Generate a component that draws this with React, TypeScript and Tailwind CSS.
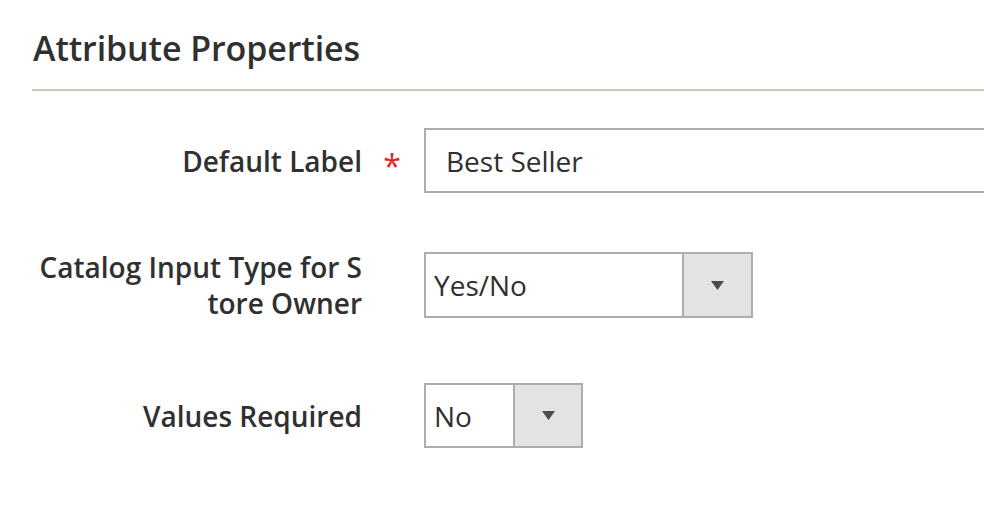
export default function App() {
  return (
    <div
      className="w-[984px] h-[520px] overflow-hidden bg-white text-[#303030]"
      style={{ fontFamily: '"Open Sans", "Liberation Sans", sans-serif' }}
    >
      <div className="pl-[32px]">
        {/* Section title */}
        <h2 className="pt-[26px] pl-[1px] text-[34px] leading-[44px] font-semibold tracking-[-0.1px]">
          Attribute Properties
        </h2>
        <div className="mt-[19px] h-[2px] bg-[#ccc5bc]" />

        {/* Default Label */}
        <div className="mt-[37px] flex items-center">
          <label className="w-[330px] text-right text-[28px] leading-[36px] font-semibold">
            Default Label
          </label>
          <span className="w-[62px] flex justify-center text-[32px] leading-none text-[#e22626] pt-[10px] pr-[2px]">
            *
          </span>
          <div className="flex-1 h-[65px] border-2 border-r-0 border-[#adadad] flex items-center pl-[20px] text-[28px]">
            Best Seller
          </div>
        </div>

        {/* Catalog Input Type */}
        <div className="mt-[56px] flex items-center">
          <label className="w-[330px] text-right text-[28px] leading-[36px] font-semibold">
            Catalog Input Type for S<br />tore Owner
          </label>
          <span className="w-[62px]" />
          <div className="w-[329px] h-[66px] border-2 border-[#adadad] flex">
            <div className="flex-1 flex items-center pl-[8px] text-[28px]">Yes/No</div>
            <div className="w-[69px] bg-[#e3e3e3] border-l-2 border-[#adadad] flex items-center justify-center">
              <svg width="13" height="9" viewBox="0 0 13 9">
                <path d="M0 0 H13 L6.5 9 Z" fill="#514943" />
              </svg>
            </div>
          </div>
        </div>

        {/* Values Required */}
        <div className="mt-[62px] flex items-center">
          <label className="w-[330px] text-right text-[28px] leading-[36px] font-semibold">
            Values Required
          </label>
          <span className="w-[62px]" />
          <div className="w-[159px] h-[65px] border-2 border-[#adadad] flex">
            <div className="flex-1 flex items-center pl-[8px] text-[28px]">No</div>
            <div className="w-[68px] bg-[#e3e3e3] border-l-2 border-[#adadad] flex items-center justify-center">
              <svg width="13" height="9" viewBox="0 0 13 9">
                <path d="M0 0 H13 L6.5 9 Z" fill="#514943" />
              </svg>
            </div>
          </div>
        </div>
      </div>
    </div>
  );
}
